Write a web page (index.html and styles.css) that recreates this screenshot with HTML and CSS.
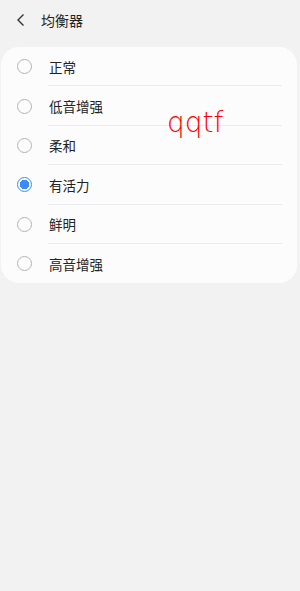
FILE: index.html
```html
<!DOCTYPE html>
<html lang="zh">
<head>
<meta charset="utf-8">
<link rel="stylesheet" href="styles.css">
</head>
<body>
<div class="page">
  <header class="header">
    <svg class="back" width="10" height="14" viewBox="0 0 10 14"><path d="M7.5 1.5 L2 7 L7.5 12.5" fill="none" stroke="#333" stroke-width="1.4"/></svg>
    <span class="title">均衡器</span>
  </header>
  <div class="card">
    <div class="row"><span class="radio"></span><span class="label">正常</span></div>
    <div class="row"><span class="radio"></span><span class="label">低音增强</span></div>
    <div class="row"><span class="radio"></span><span class="label">柔和</span><span class="mark">qqtf</span></div>
    <div class="row"><span class="radio on"></span><span class="label">有活力</span></div>
    <div class="row"><span class="radio"></span><span class="label">鲜明</span></div>
    <div class="row last"><span class="radio"></span><span class="label">高音增强</span></div>
  </div>
</div>
</body>
</html>
```
FILE: styles.css
```css
html, body { margin: 0; padding: 0; }
body {
  background: #f2f2f2;
  font-family: "Noto Sans CJK SC", "Noto Sans", sans-serif;
  color: #222;
  width: 300px;
  height: 591px;
  overflow: hidden;
}
.header {
  height: 40px;
  display: flex;
  align-items: center;
  padding-left: 16px;
}
.back { margin-right: 15px; }
.title { font-size: 14px; color: #222; }
.card {
  margin: 7px 3px 0 1px;
  background: #fcfcfc;
  border-radius: 18px;
  padding: 0 15px;
}
.row {
  height: 39.4px;
  display: flex;
  align-items: center;
  position: relative;
}
.row::after {
  content: "";
  position: absolute;
  left: 32px;
  right: 0;
  bottom: 0;
  height: 1px;
  background: #ebebeb;
}
.row.last::after { display: none; }
.radio {
  width: 13px;
  height: 13px;
  border: 1.3px solid #b4b4b4;
  border-radius: 50%;
  box-sizing: content-box;
  margin-left: 1px;
  margin-right: 17px;
  flex: none;
}
.radio.on {
  border-color: #3e8bf4;
  background: radial-gradient(circle, #3e8bf4 0 4.5px, transparent 5px);
}
.label { font-size: 13.5px; color: #222; }
.mark {
  position: absolute;
  left: 151px;
  top: -20px;
  font-family: "DejaVu Sans", sans-serif;
  font-weight: 200;
  font-size: 28px;
  color: #ff0000;
}
```
